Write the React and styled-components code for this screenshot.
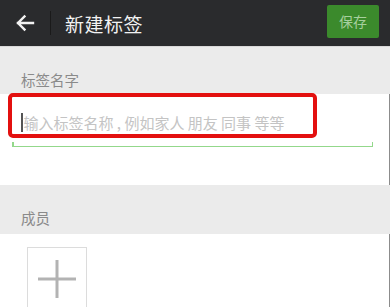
import React from 'react';
import styled, { createGlobalStyle } from 'styled-components';

const GlobalStyle = createGlobalStyle`
  html, body {
    margin: 0;
    padding: 0;
    background: #ffffff;
  }
  body {
    font-family: "Noto Sans CJK SC", "Noto Sans", sans-serif;
  }
`;

const Page = styled.div`
  width: 390px;
  height: 307px;
  overflow: hidden;
  background: #ffffff;
  display: flex;
  flex-direction: column;
`;

const Header = styled.div`
  height: 47px;
  flex-shrink: 0;
  background: #2a2b2d;
  border-bottom: 1px solid #d9d9d9;
  box-sizing: border-box;
  display: flex;
  align-items: center;
  padding: 0 11px 0 14px;
`;

const BackButton = styled.div`
  width: 22px;
  height: 22px;
  display: flex;
  align-items: center;
  justify-content: center;
`;

const Divider = styled.div`
  width: 1px;
  height: 24px;
  background: #1a1a1a;
  margin: 0 14px 0 14px;
`;

const Title = styled.div`
  flex: 1;
  color: #f2f2f2;
  font-size: 19px;
  letter-spacing: 0.5px;
`;

const SaveButton = styled.div`
  width: 52px;
  height: 33px;
  margin-top: -4px;
  border-radius: 2px;
  background: #3b8a2c;
  color: #a6cf9e;
  font-size: 14px;
  display: flex;
  align-items: center;
  justify-content: center;
`;

const SectionLabel = styled.div`
  height: ${(p) => p.$h}px;
  flex-shrink: 0;
  background: #ebebeb;
  color: #8a8a8a;
  font-size: 14.5px;
  box-sizing: border-box;
  padding: 0 21px ${(p) => p.$pb}px;
  display: flex;
  align-items: flex-end;
`;

const WhiteBlock = styled.div`
  position: relative;
  height: ${(p) => (p.$h ? `${p.$h}px` : 'auto')};
  flex: ${(p) => (p.$h ? '0 0 auto' : '1')};
  background: #fff;
  border-right: 1px solid #8c8c8c;
  box-sizing: border-box;
`;

const InputRow = styled.div`
  position: relative;
  margin: 0 16px 0 12px;
  padding: 18px 0 13px 9px;
  display: flex;
  align-items: center;
  border-bottom: 1.5px solid #93d88b;
  &::before,
  &::after {
    content: '';
    position: absolute;
    bottom: 0;
    width: 1.5px;
    height: 4px;
    background: #93d88b;
  }
  &::before {
    left: 0;
  }
  &::after {
    right: 0;
  }
`;

const Cursor = styled.span`
  width: 1.5px;
  height: 19px;
  background: #555;
  margin-right: 1px;
`;

const Placeholder = styled.span`
  color: #c4c4c4;
  font-size: 15px;
  white-space: pre;
`;

const Highlight = styled.div`
  position: absolute;
  left: 8px;
  top: -1px;
  width: 309px;
  height: 45px;
  border: 4px solid #e3100f;
  border-radius: 5px;
  box-sizing: border-box;
`;

const AddBox = styled.div`
  margin: 13px 0 0 27px;
  width: 60px;
  height: 70px;
  border: 1px solid #dcdcdc;
  box-sizing: border-box;
  display: flex;
  justify-content: center;
  padding-top: 11px;
`;

export default function App() {
  return (
    <Page>
      <GlobalStyle />
      <Header>
        <BackButton>
          <svg width="20" height="18" viewBox="0 0 20 18" fill="none">
            <path d="M18 9H3M9.5 2.5L3 9l6.5 6.5" stroke="#f2f2f2" strokeWidth="2.4" strokeLinecap="square" />
          </svg>
        </BackButton>
        <Divider />
        <Title>新建标签</Title>
        <SaveButton>保存</SaveButton>
      </Header>
      <SectionLabel $h={47} $pb={4}>标签名字</SectionLabel>
      <WhiteBlock $h={91}>
        <InputRow>
          <Cursor />
          <Placeholder>输入标签名称 , 例如家人 朋友 同事 等等</Placeholder>
        </InputRow>
        <Highlight />
      </WhiteBlock>
      <SectionLabel $h={49} $pb={6}>成员</SectionLabel>
      <WhiteBlock>
        <AddBox>
          <svg width="40" height="40" viewBox="0 0 40 40">
            <path d="M20 1v38M1 20h38" stroke="#b3b3b3" strokeWidth="3" />
          </svg>
        </AddBox>
      </WhiteBlock>
    </Page>
  );
}
